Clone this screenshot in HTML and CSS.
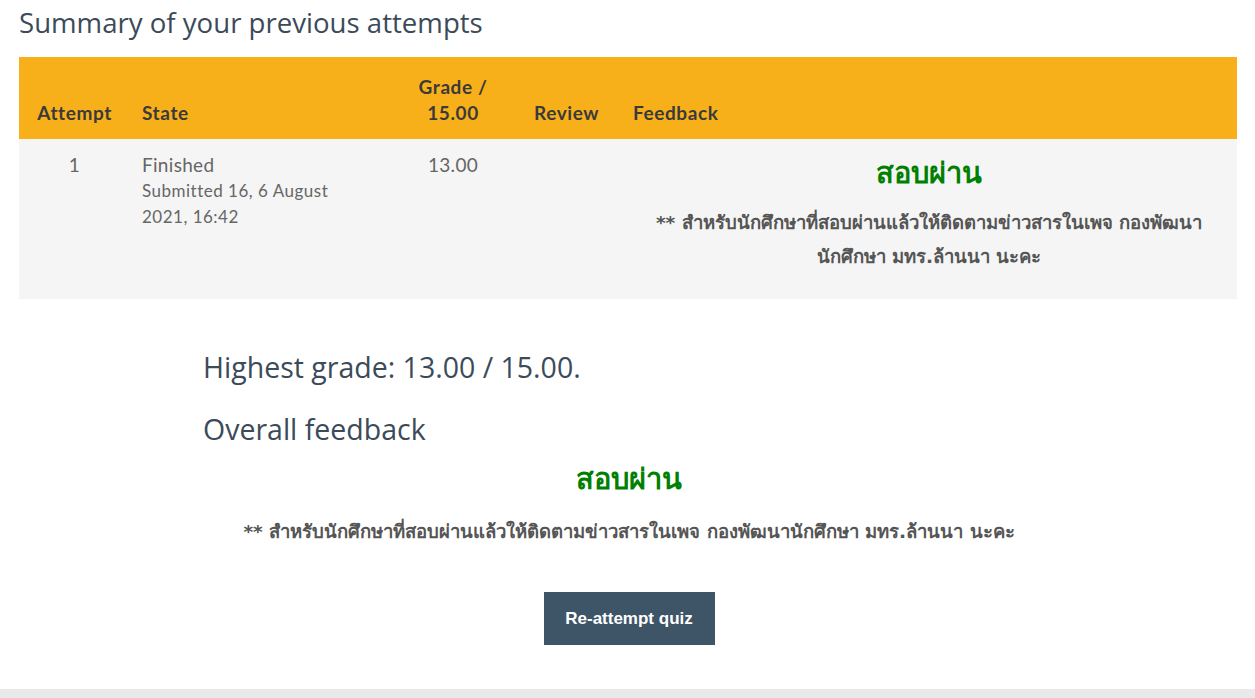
FILE: index.html
```html
<!DOCTYPE html>
<html>
<head>
<meta charset="utf-8">
<link rel="stylesheet" href="styles.css">
</head>
<body>
<div class="page">
  <h2 class="title">Summary of your previous attempts</h2>
  <table class="attempts">
    <thead>
      <tr>
        <th class="c-attempt">Attempt</th>
        <th class="c-state">State</th>
        <th class="c-grade">Grade /<br>15.00</th>
        <th class="c-review">Review</th>
        <th class="c-feedback">Feedback</th>
      </tr>
    </thead>
    <tbody>
      <tr>
        <td class="c-attempt">1</td>
        <td class="c-state">Finished<span class="sub">Submitted 16, 6 August 2021, 16:42</span></td>
        <td class="c-grade">13.00</td>
        <td class="c-review"></td>
        <td class="c-feedback">
          <div class="pass">สอบผ่าน</div>
          <p class="note">** สำหรับนักศึกษาที่สอบผ่านแล้วให้ติดตามข่าวสารในเพจ กองพัฒนานักศึกษา มทร.ล้านนา นะคะ</p>
        </td>
      </tr>
    </tbody>
  </table>
  <div class="result">
    <h3 class="highest">Highest grade: 13.00 / 15.00.</h3>
    <h3 class="overall">Overall feedback</h3>
    <div class="overall-body">
      <div class="pass">สอบผ่าน</div>
      <p class="note">** สำหรับนักศึกษาที่สอบผ่านแล้วให้ติดตามข่าวสารในเพจ กองพัฒนานักศึกษา มทร.ล้านนา นะคะ</p>
    </div>
    <div class="actions">
      <button class="btn">Re-attempt quiz</button>
    </div>
  </div>
</div>
<div class="footer-bar"></div>
</body>
</html>
```

FILE: styles.css
```css
html, body {
  margin: 0;
  padding: 0;
  background: #ffffff;
}
body {
  font-family: "Lato", "Noto Sans", sans-serif;
  color: #3b4b5a;
}
.page {
  padding: 0 18px 0 19px;
}
.title {
  margin: 0;
  padding-top: 3px;
  height: 54px;
  font-family: "Open Sans", "Noto Sans", sans-serif;
  font-weight: 400;
  font-size: 27.6px;
  line-height: 38px;
  color: #3b4b5a;
}
.attempts {
  width: 100%;
  border-collapse: collapse;
  table-layout: fixed;
  font-family: "Lato", sans-serif;
}
.attempts th {
  background: #f8b01a;
  color: #3a3a3a;
  font-weight: 700;
  font-size: 19px;
  letter-spacing: 0.6px;
  line-height: 26px;
  padding: 17px 12px 13px;
  vertical-align: bottom;
  text-align: left;
}
.attempts td {
  background: #f5f5f5;
  color: #666666;
  font-size: 19px;
  letter-spacing: 0.3px;
  line-height: 26px;
  padding: 13px 12px 25px;
  vertical-align: top;
  text-align: left;
}
.attempts .c-attempt { width: 87px; text-align: center; }
.attempts .c-state { width: 230px; }
.attempts .c-grade { width: 114px; text-align: center; }
.attempts .c-review { width: 75px; }
.attempts td.c-feedback { text-align: center; padding-top: 14px; letter-spacing: 0; }
.sub {
  display: block;
  font-size: 17px;
  letter-spacing: 0.5px;
}
.pass {
  font-family: "DejaVu Sans", sans-serif;
  color: #008000;
  font-weight: 700;
  font-size: 29px;
  line-height: 40px;
}
.note {
  margin: 13px 0 0;
  font-family: "DejaVu Sans", sans-serif;
  font-weight: 700;
  color: #555555;
  font-size: 18.5px;
  line-height: 34px;
}
.result {
  width: 852px;
  margin: 0 auto;
  padding-left: 2px;
}
.highest {
  margin: 48px 0 0;
  font-family: "Open Sans", "Noto Sans", sans-serif;
  font-weight: 400;
  font-size: 28.5px;
  line-height: 40px;
  color: #3b4b5a;
}
.overall {
  margin: 22px 0 0;
  font-family: "Open Sans", "Noto Sans", sans-serif;
  font-weight: 400;
  font-size: 28.5px;
  line-height: 40px;
  color: #3b4b5a;
}
.overall-body {
  text-align: center;
}
.overall-body .pass {
  margin-top: 10px;
}
.overall-body .note {
  margin-top: 16px;
}
.actions {
  display: flex;
  justify-content: center;
  padding-top: 43px;
  padding-bottom: 44px;
}
.btn {
  background: #3e5567;
  color: #ffffff;
  border: none;
  font-family: "Liberation Sans", Arial, sans-serif;
  font-weight: 700;
  font-size: 17px;
  width: 171px;
  height: 53px;
  padding: 0;
}
.footer-bar {
  background: #e9e9ec;
  height: 20px;
}
```
